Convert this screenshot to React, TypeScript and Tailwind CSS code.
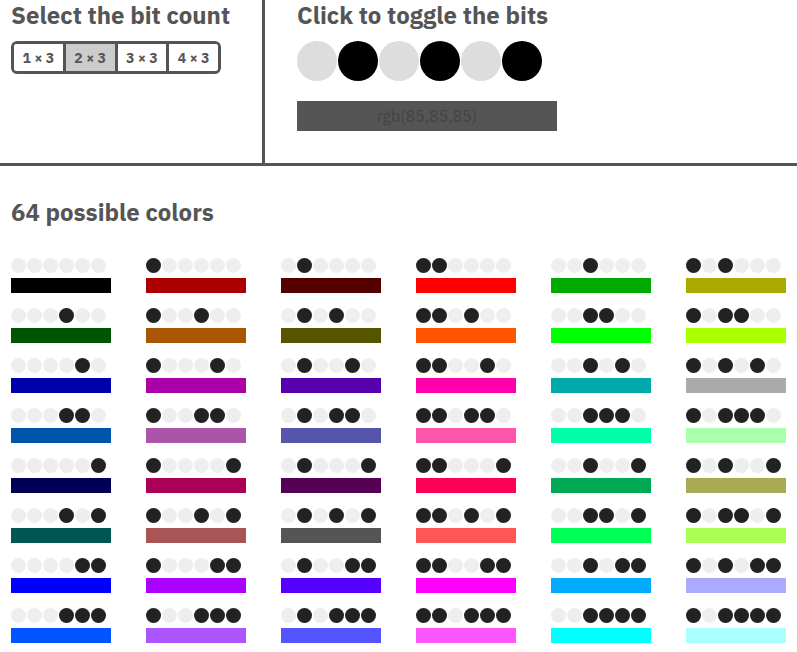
import { useState } from "react";
import clsx from "clsx";

const BIT_COUNTS = [1, 2, 3, 4];

/** Turns a run of bits, `perChannel` for each of R, G and B, into a CSS colour. */
function toRgb(bits: boolean[], perChannel: number): string {
  const max = 2 ** perChannel - 1;
  const channels = [0, 1, 2].map((channel) => {
    const value = bits
      .slice(channel * perChannel, (channel + 1) * perChannel)
      .reduce((sum, bit) => sum * 2 + (bit ? 1 : 0), 0);
    return Math.round((value * 255) / max);
  });
  return `rgb(${channels.join(",")})`;
}

function toBits(index: number, length: number): boolean[] {
  return Array.from({ length }, (_, i) => ((index >> i) & 1) === 1);
}

function Heading({ children }: { children: React.ReactNode }) {
  return <h2 className="text-2xl leading-[30px] font-bold whitespace-nowrap">{children}</h2>;
}

function BitCountPicker({ value, onChange }: { value: number; onChange: (count: number) => void }) {
  return (
    <div className="mt-[11px] flex h-[33px] w-[210px] divide-x-3 divide-[#555] overflow-hidden rounded-md border-3 border-[#555]">
      {BIT_COUNTS.map((count) => (
        <button
          key={count}
          type="button"
          aria-pressed={count === value}
          onClick={() => onChange(count)}
          className={clsx("flex-1 cursor-pointer text-sm font-bold", count === value ? "bg-[#ccc]" : "bg-white")}
        >
          {count} × 3
        </button>
      ))}
    </div>
  );
}

function BitToggles({ bits, onToggle }: { bits: boolean[]; onToggle: (index: number) => void }) {
  return (
    <div className="mt-[11px] flex gap-px">
      {bits.map((bit, i) => (
        <button
          key={i}
          type="button"
          aria-label={`Bit ${i + 1}`}
          aria-pressed={bit}
          onClick={() => onToggle(i)}
          className={clsx("size-10 shrink-0 cursor-pointer rounded-full", bit ? "bg-black" : "bg-[#ddd]")}
        />
      ))}
    </div>
  );
}

function Swatch({ bits, perChannel }: { bits: boolean[]; perChannel: number }) {
  return (
    <li className="flex flex-col gap-[5px]">
      <div className="flex gap-px">
        {bits.map((bit, i) => (
          <span key={i} className={clsx("size-[15px] shrink-0 rounded-full", bit ? "bg-[#222]" : "bg-[#eee]")} />
        ))}
      </div>
      <div className="h-[15px] w-[100px]" style={{ backgroundColor: toRgb(bits, perChannel) }} />
    </li>
  );
}

export default function App() {
  const [perChannel, setPerChannel] = useState(2);
  const [bits, setBits] = useState([false, true, false, true, false, true]);

  const total = 2 ** (perChannel * 3);
  const color = toRgb(bits, perChannel);

  const changeCount = (count: number) => {
    setPerChannel(count);
    setBits(Array.from({ length: count * 3 }, () => false));
  };

  return (
    <main className="bg-white font-['IBM_Plex_Sans',Roboto,sans-serif] text-[#555]">
      <div className="flex border-b-3 border-[#555]">
        <section className="border-r-3 border-[#555] pr-8 pl-[11px]">
          <Heading>Select the bit count</Heading>
          <BitCountPicker value={perChannel} onChange={changeCount} />
        </section>
        <section className="flex-1 px-8 pb-8">
          <Heading>Click to toggle the bits</Heading>
          <BitToggles bits={bits} onToggle={(index) => setBits(bits.map((bit, i) => (i === index ? !bit : bit)))} />
          <div
            className="mt-5 h-[30px] w-[260px] text-center leading-[30px] text-[#444]"
            style={{ backgroundColor: color }}
          >
            {color}
          </div>
        </section>
      </div>
      <section className="pt-[31px] pl-[11px]">
        <Heading>{total} possible colors</Heading>
        <ul className="mt-[31px] grid grid-cols-[repeat(8,100px)] gap-x-[35px] gap-y-[15px] overflow-x-auto [scrollbar-width:none]">
          {Array.from({ length: total }, (_, index) => (
            <Swatch key={index} bits={toBits(index, perChannel * 3)} perChannel={perChannel} />
          ))}
        </ul>
      </section>
    </main>
  );
}
